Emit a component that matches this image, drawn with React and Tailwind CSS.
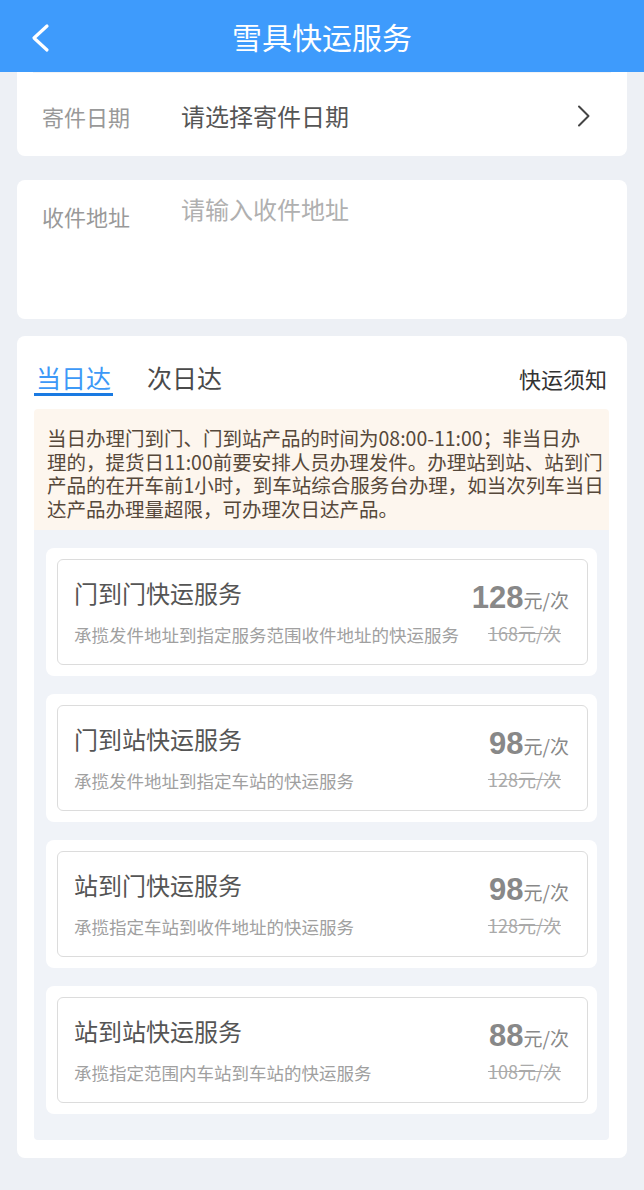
import React from "react";

const services = [
  { title: "门到门快运服务", desc: "承揽发件地址到指定服务范围收件地址的快运服务", price: "128", old: "168" },
  { title: "门到站快运服务", desc: "承揽发件地址到指定车站的快运服务", price: "98", old: "128" },
  { title: "站到门快运服务", desc: "承揽指定车站到收件地址的快运服务", price: "98", old: "128" },
  { title: "站到站快运服务", desc: "承揽指定范围内车站到车站的快运服务", price: "88", old: "108" },
];

const notice = [
  "当日办理门到门、门到站产品的时间为08:00-11:00；非当日办",
  "理的，提货日11:00前要安排人员办理发件。办理站到站、站到门",
  "产品的在开车前1小时，到车站综合服务台办理，如当次列车当日",
  "达产品办理量超限，可办理次日达产品。",
];

function ServiceCard({ item }) {
  return (
    <div className="bg-white rounded-lg pl-[11px] pr-[9px] py-[11px]">
      <div className="h-[106px] border border-[#dcdcdc] rounded-md flex justify-between pl-[16px] pr-[18px]">
        <div className="flex flex-col pt-[18px]">
          <div className="text-[24px] leading-[30px] text-[#555]">{item.title}</div>
          <div className="text-[17.5px] leading-[24px] text-[#a0a0a0] mt-[15px]">{item.desc}</div>
        </div>
        <div className="flex flex-col items-end pt-[21px]">
          <div className="leading-[34px] text-[#888] whitespace-nowrap">
            <span className="text-[31px] font-bold font-['Liberation_Sans',sans-serif]">{item.price}</span>
            <span className="text-[19px]">元/次</span>
          </div>
          <div className="text-[18px] leading-[22px] text-[#aaa] line-through mt-[4px] mr-[8px] whitespace-nowrap">
            {item.old}元/次
          </div>
        </div>
      </div>
    </div>
  );
}

export default function App() {
  return (
    <div className="min-h-[1190px] bg-[#edf0f5] font-['Noto_Sans_CJK_SC','Noto_Sans',sans-serif]">
      {/* header */}
      <div className="h-[72px] bg-[#3e9bfc] flex items-center justify-center relative">
        <svg className="absolute left-[28px] top-[23px]" width="24" height="30" viewBox="0 0 24 30" fill="none">
          <path d="M19 3 L6 15 L19 27" stroke="white" strokeWidth="3.2" strokeLinecap="round" strokeLinejoin="round" />
        </svg>
        <div className="text-white text-[30px] leading-[40px]">雪具快运服务</div>
      </div>

      {/* date row */}
      <div className="mx-[17px] bg-white rounded-b-lg h-[84px] px-[16px]">
        <div className="border-t border-[#f2f3f5]" />
        <div className="h-[82px] pt-[4px] flex items-center pl-[9px] pr-[20px]">
          <span className="w-[139px] text-[22px] text-[#999]">寄件日期</span>
          <span className="flex-1 text-[24px] text-[#555]">请选择寄件日期</span>
          <svg width="14" height="22" viewBox="0 0 14 22" fill="none">
            <path d="M2 1.5 L11.5 11 L2 20.5" stroke="#444" strokeWidth="2" strokeLinecap="round" strokeLinejoin="round" />
          </svg>
        </div>
      </div>

      {/* address */}
      <div className="mx-[17px] mt-[24px] bg-white rounded-lg h-[139px] flex items-start pl-[25px] pt-[18px]">
        <span className="w-[139px] text-[22px] leading-[32px] text-[#999] mt-[2px]">收件地址</span>
        <span className="text-[24px] leading-[20px] text-[#b0b0b0] mt-[1px]">请输入收件地址</span>
      </div>

      {/* services */}
      <div className="mx-[17px] mt-[17px] bg-white rounded-lg pl-[17px] pr-[18px] pb-[18px]">
        <div className="flex items-start justify-between pt-[26px]">
          <div className="flex items-start gap-[34px]">
            <div className="border-b-[3px] border-[#1a7ae2] px-[2px]">
              <div className="text-[25px] leading-[31px] text-[#3d99f7]">当日达</div>
            </div>
            <div className="text-[25px] leading-[31px] text-[#4a4a4a]">次日达</div>
          </div>
          <div className="text-[22px] leading-[32px] text-[#333] pr-[2px]">快运须知</div>
        </div>

        <div className="mt-[13px] bg-[#fdf6ee] rounded-t-sm pl-[13px] pr-[10px] pt-[17px] pb-[10px] text-[19.5px] leading-[23.5px] text-[#56483a]">
          {notice.map((line) => (
            <div key={line} className="whitespace-nowrap">{line}</div>
          ))}
        </div>

        <div className="bg-[#f0f3f8] rounded-b-sm px-[12px] pt-[18px] pb-[26px] flex flex-col gap-[18px]">
          {services.map((s) => (
            <ServiceCard key={s.title} item={s} />
          ))}
        </div>
      </div>
    </div>
  );
}
